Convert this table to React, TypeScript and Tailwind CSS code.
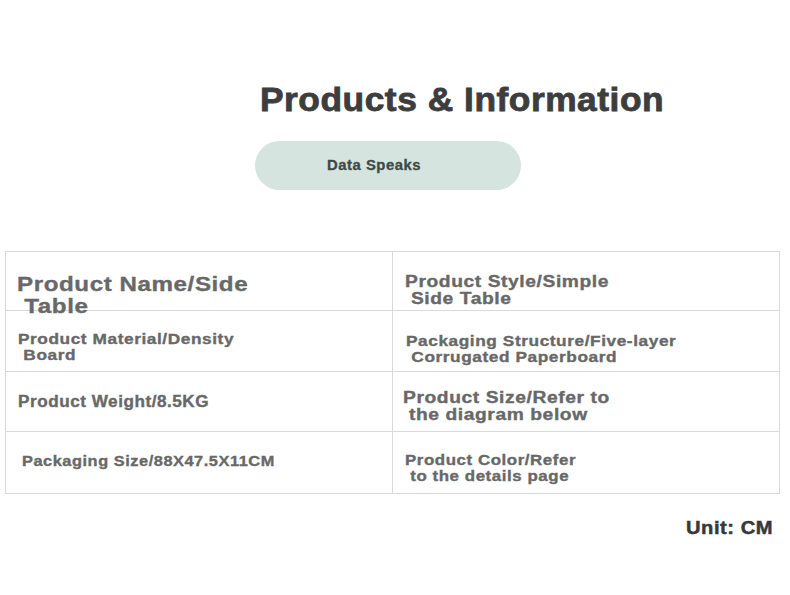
const rows = [
  {
    h: "h-[59px]",
    left: {
      lines: ["Product Name/Side", " Table"],
      cls: "pl-[11px] pt-[21px] text-[21px] leading-[22px]",
      fit: "scale-x-[1.15]",
    },
    right: {
      lines: ["Product Style/Simple", " Side Table"],
      cls: "pl-[12px] pt-[21px] text-[16px] leading-[17px]",
      fit: "scale-x-[1.2]",
    },
  },
  {
    h: "h-[61px]",
    left: {
      lines: ["Product Material/Density", " Board"],
      cls: "pl-[12px] pt-[20px] text-[15px] leading-[16px]",
      fit: "scale-x-[1.15]",
    },
    right: {
      lines: ["Packaging Structure/Five-layer", " Corrugated Paperboard"],
      cls: "pl-[13px] pt-[22px] text-[15px] leading-[16px]",
      fit: "scale-x-[1.15]",
    },
  },
  {
    h: "h-[60px]",
    left: {
      lines: ["Product Weight/8.5KG"],
      cls: "pl-[12px] pt-[21px] text-[16px] leading-[17px]",
      fit: "scale-x-[1.07]",
    },
    right: {
      lines: ["Product Size/Refer to", " the diagram below"],
      cls: "pl-[10px] pt-[17px] text-[16px] leading-[17px]",
      fit: "scale-x-[1.2]",
    },
  },
  {
    h: "h-[62px]",
    left: {
      lines: ["Packaging Size/88X47.5X11CM"],
      cls: "pl-[16px] pt-[21px] text-[15px] leading-[16px]",
      fit: "scale-x-[1.09]",
    },
    right: {
      lines: ["Product Color/Refer", " to the details page"],
      cls: "pl-[12px] pt-[20px] text-[15px] leading-[16px]",
      fit: "scale-x-[1.125]",
    },
  },
];

function Cell({ lines, cls, fit }: { lines: string[]; cls: string; fit: string }) {
  return (
    <div className={`w-[387px] shrink-0 border-r border-[#d9d9d9] font-bold text-[#686868] ${cls}`}>
      <div className={`origin-left tracking-[0.5px] [-webkit-text-stroke:0.35px_currentColor] ${fit}`}>
        {lines.map((line, i) => (
          <div key={i} className="whitespace-pre">
            {line}
          </div>
        ))}
      </div>
    </div>
  );
}

export default function App() {
  return (
    <div className="w-[790px] h-[595px] bg-white overflow-hidden font-['Liberation_Sans',Arial,sans-serif]">
      <div className="pt-[80px] pl-[260px]">
        <h1 className="origin-left scale-x-[1.07] text-[33px] leading-[40px] font-bold tracking-[0.5px] text-[#3d3d3d] whitespace-nowrap [-webkit-text-stroke:0.8px_currentColor]">
          Products &amp; Information
        </h1>
      </div>

      <div className="mt-[21px] ml-[255px] w-[266px] h-[49px] rounded-full bg-[#d6e4e0] flex items-center pl-[72px]">
        <span className="inline-block origin-left scale-x-[1.06] text-[14px] font-bold tracking-[0.5px] text-[#3e4a46] [-webkit-text-stroke:0.3px_currentColor]">
          Data Speaks
        </span>
      </div>

      <div className="mt-[61px] ml-[5px] w-[775px] border-l border-t border-[#d9d9d9]">
        {rows.map((row, i) => (
          <div key={i} className={`flex border-b border-[#d9d9d9] ${row.h}`}>
            <Cell {...row.left} />
            <Cell {...row.right} />
          </div>
        ))}
      </div>

      <div className="mt-[23px] pl-[686px]">
        <div className="origin-left scale-x-[1.06] text-[19px] leading-[22px] font-bold tracking-[0.5px] text-[#383838] whitespace-nowrap [-webkit-text-stroke:0.5px_currentColor]">
          Unit: CM
        </div>
      </div>
    </div>
  );
}
